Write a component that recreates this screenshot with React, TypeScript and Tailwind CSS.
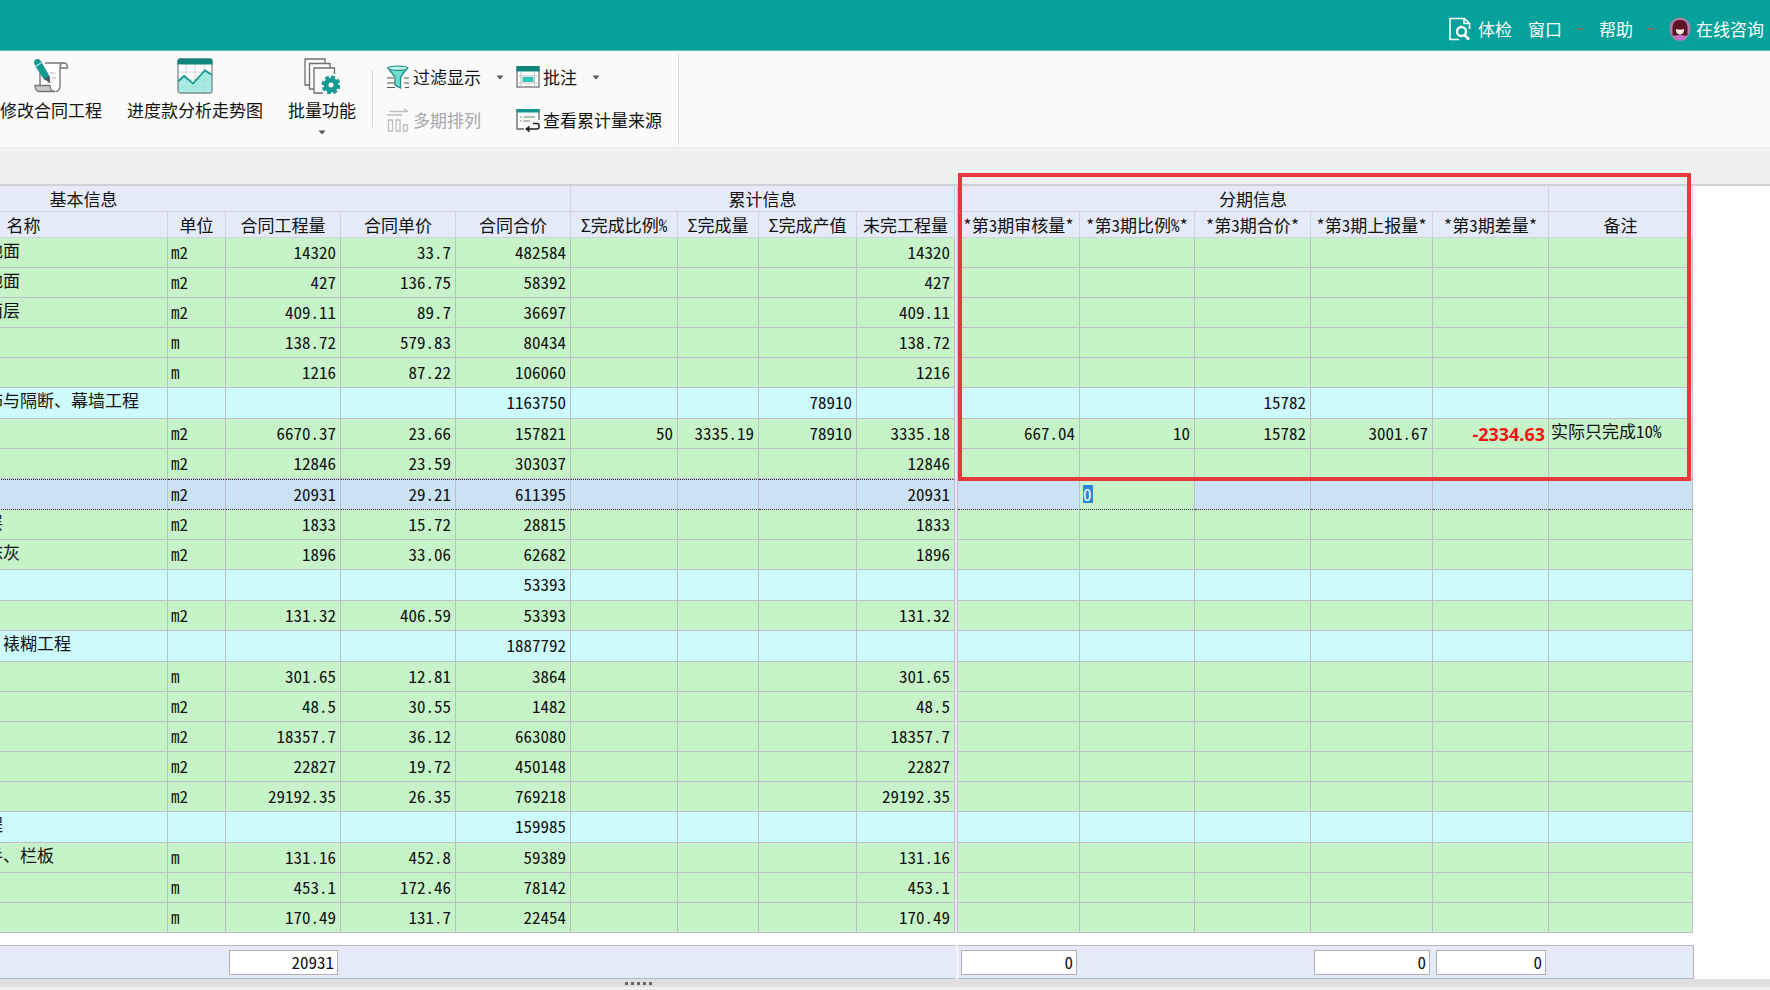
import type { ReactNode } from "react";

type Row = {
  kind?: "group" | "selected";
  name?: string;
  cells: string[];
  period?: string[];
};

const rows: Row[] = [
  { name: "地面", cells: ["m2", "14320", "33.7", "482584", "", "", "", "14320"] },
  { name: "地面", cells: ["m2", "427", "136.75", "58392", "", "", "", "427"] },
  { name: "面层", cells: ["m2", "409.11", "89.7", "36697", "", "", "", "409.11"] },
  { cells: ["m", "138.72", "579.83", "80434", "", "", "", "138.72"] },
  { cells: ["m", "1216", "87.22", "106060", "", "", "", "1216"] },
  {
    kind: "group",
    name: "饰与隔断、幕墙工程",
    cells: ["", "", "", "1163750", "", "", "78910", ""],
    period: ["", "", "15782", "", "", ""],
  },
  {
    cells: ["m2", "6670.37", "23.66", "157821", "50", "3335.19", "78910", "3335.18"],
    period: ["667.04", "10", "15782", "3001.67", "-2334.63", "实际只完成10%"],
  },
  { cells: ["m2", "12846", "23.59", "303037", "", "", "", "12846"] },
  { kind: "selected", cells: ["m2", "20931", "29.21", "611395", "", "", "", "20931"] },
  { name: "层", cells: ["m2", "1833", "15.72", "28815", "", "", "", "1833"] },
  { name: "抹灰", cells: ["m2", "1896", "33.06", "62682", "", "", "", "1896"] },
  { kind: "group", cells: ["", "", "", "53393", "", "", "", ""] },
  { cells: ["m2", "131.32", "406.59", "53393", "", "", "", "131.32"] },
  { kind: "group", name: "、裱糊工程", cells: ["", "", "", "1887792", "", "", "", ""] },
  { cells: ["m", "301.65", "12.81", "3864", "", "", "", "301.65"] },
  { cells: ["m2", "48.5", "30.55", "1482", "", "", "", "48.5"] },
  { cells: ["m2", "18357.7", "36.12", "663080", "", "", "", "18357.7"] },
  { cells: ["m2", "22827", "19.72", "450148", "", "", "", "22827"] },
  { cells: ["m2", "29192.35", "26.35", "769218", "", "", "", "29192.35"] },
  { kind: "group", name: "程", cells: ["", "", "", "159985", "", "", "", ""] },
  { name: "手、栏板", cells: ["m", "131.16", "452.8", "59389", "", "", "", "131.16"] },
  { cells: ["m", "453.1", "172.46", "78142", "", "", "", "453.1"] },
  { cells: ["m", "170.49", "131.7", "22454", "", "", "", "170.49"] },
];

const emptyPeriod = ["", "", "", "", "", ""];

const mainHeads = ["名称", "单位", "合同工程量", "合同单价", "合同合价", "Σ完成比例%", "Σ完成量", "Σ完成产值", "未完工程量"];
const periodHeads = ["*第3期审核量*", "*第3期比例%*", "*第3期合价*", "*第3期上报量*", "*第3期差量*", "备注"];

const head = "border-r border-b border-[#d0d2e2] bg-[#e4eaf7] p-0 text-center font-normal whitespace-nowrap";
const cell = "border-r border-[#bcbccb] px-0 pt-0 overflow-hidden whitespace-nowrap";

function rowClass(kind?: string) {
  if (kind === "group") return "h-[31px] bg-[#cdfbfc]";
  if (kind === "selected") return "h-[31px] bg-[#cbe2f5]";
  return "h-[30px] bg-[#c6f4c8]";
}

function lineClass(kind?: string) {
  return kind === "selected"
    ? "border-y border-t-[#333] border-b-[#333] [border-top-style:dotted] [border-bottom-style:dotted]"
    : "border-b";
}

function MainCols() {
  return (
    <colgroup>
      <col className="w-[283px]" />
      <col className="w-[288px]" />
      <col className="w-[58px]" />
      <col className="w-[115px]" />
      <col className="w-[115px]" />
      <col className="w-[115px]" />
      <col className="w-[107px]" />
      <col className="w-[81px]" />
      <col className="w-[98px]" />
      <col className="w-[98px]" />
    </colgroup>
  );
}

function PeriodCols() {
  return (
    <colgroup>
      <col className="w-[122px]" />
      <col className="w-[115px]" />
      <col className="w-[116px]" />
      <col className="w-[122px]" />
      <col className="w-[116px]" />
      <col className="w-[144px]" />
    </colgroup>
  );
}

function MainTable() {
  return (
    <table className="-ml-[403px] w-[1358px] shrink-0 table-fixed border-separate border-spacing-0">
      <MainCols />
      <thead>
        <tr className="h-[26px]">
          <th colSpan={6} className={head}>基本信息</th>
          <th colSpan={4} className={head}>累计信息</th>
        </tr>
        <tr className="h-[26px]">
          <th className={head} />
          {mainHeads.map((h) => (
            <th key={h} className={head}>{h}</th>
          ))}
        </tr>
      </thead>
      <tbody>
        {rows.map((r, i) => (
          <tr key={i} className={rowClass(r.kind)}>
            <td className={`${cell} ${lineClass(r.kind)}`} />
            <td className={`${cell} ${lineClass(r.kind)} pb-[6px] pl-[106px]`}>{r.name}</td>
            {r.cells.map((c, j) => (
              <td key={j} className={`${cell} ${lineClass(r.kind)} pb-[2px] ${j === 0 ? "pl-[3px] text-left" : "pr-1 text-right"}`}>
                {c}
              </td>
            ))}
          </tr>
        ))}
      </tbody>
    </table>
  );
}

function PeriodTable() {
  return (
    <table className="w-[735px] table-fixed border-separate border-spacing-0">
      <PeriodCols />
      <thead>
        <tr className="h-[26px]">
          <th colSpan={5} className={head}>分期信息</th>
          <th className={head} />
        </tr>
        <tr className="h-[26px]">
          {periodHeads.map((h) => (
            <th key={h} className={head}>{h}</th>
          ))}
        </tr>
      </thead>
      <tbody>
        {rows.map((r, i) => (
          <tr key={i} className={rowClass(r.kind)}>
            {(r.period ?? emptyPeriod).map((c, j) => {
              const base = `${cell} ${lineClass(r.kind)}`;
              if (r.kind === "selected" && j === 1)
                return (
                  <td key={j} className={`${base} bg-[#c6f4c8] pb-[2px] pl-[3px]`}>
                    <input
                      aria-label="第3期比例"
                      defaultValue="0"
                      className="block h-[18px] w-[10px] bg-[#2f86e0] p-0 text-left text-white outline-none"
                    />
                  </td>
                );
              if (j === 5) return <td key={j} className={`${base} pb-[6px] pl-[2px] text-left`}>{c}</td>;
              if (j === 4)
                return (
                  <td key={j} className={`${base} pr-[3px] pb-0 text-right font-['Noto_Sans',sans-serif] text-[18px] font-bold text-[#f01414]`}>
                    {c}
                  </td>
                );
              return <td key={j} className={`${base} pr-1 pb-[2px] text-right`}>{c}</td>;
            })}
          </tr>
        ))}
      </tbody>
    </table>
  );
}

function Total({ label, value }: { label: string; value: string }) {
  return (
    <input
      aria-label={label}
      readOnly
      value={value}
      className="block h-[25px] w-full border border-[#b0b0b4] bg-white px-[3px] pb-[2px] text-right outline-none"
    />
  );
}

function Caret() {
  return (
    <svg width="8" height="5" viewBox="0 0 8 5" className="shrink-0">
      <path d="M0.5 0.5h7L4 4.5z" fill="#555" />
    </svg>
  );
}

function EditContractIcon() {
  return (
    <svg width="36" height="36" viewBox="0 0 36 36" fill="none">
      <path d="M12 5h18c-3 0-3 3-3 6v17c0 3-1 5.500-4 5.500H6" fill="#fff" />
      <path d="M12 5h18M27 11c0-3 0-6 3.500-6s4 2 4 5h-7.500v17c0 3.500-1 6.500-4.500 6.500M7 12v15" stroke="#777" strokeWidth="1.400" />
      <path d="M2 27.500h15c0 3.500 1.500 6 5 6H6.500C3.500 33.500 2 31 2 27.500z" fill="#c9c9cf" stroke="#777" strokeWidth="1.300" />
      <path d="M17 15h6M19 20h4M14 24.500h6" stroke="#b5b5b5" strokeWidth="1.200" strokeDasharray="4 1" />
      <path d="M1.800 7.500l6-4.500L16.500 18l.5 6-6-2.500z" fill="#159a91" />
      <circle cx="4.500" cy="4.500" r="3.400" fill="#159a91" />
      <path d="M1.500 9L8 5" stroke="#b9eee8" strokeWidth="1.200" />
      <path d="M11 21l5.500-3 .8 7z" fill="#55555c" />
    </svg>
  );
}

function TrendIcon() {
  return (
    <svg width="36" height="36" viewBox="0 0 36 36" fill="none">
      <rect x="1" y="1" width="34" height="34" rx="2" fill="#fff" />
      <path d="M9 6v28M18 6v28M27 6v28M2 14h32M2 22h32M2 29h32" stroke="#c8d4d4" strokeWidth="1" />
      <path d="M1 22l6-5 9 8 12-13 7 4v17a2 2 0 01-2 2H3a2 2 0 01-2-2z" fill="#8ee5da" fillOpacity=".75" />
      <path d="M1 23.500l6-5.500 9 7.500L28 12.500l7 4.500" stroke="#159a91" strokeWidth="1.800" />
      <rect x="1" y="1" width="34" height="34" rx="2" stroke="#7d8a8c" strokeWidth="1.300" />
      <path d="M.5 6.500V3a2.500 2.500 0 012.500-2.500h30A2.500 2.500 0 0135.500 3v3.500z" fill="#12857e" />
    </svg>
  );
}

function BatchIcon() {
  return (
    <svg width="36" height="36" viewBox="0 0 36 36" fill="none" stroke="#6f6f6f" strokeWidth="1.300">
      <path d="M5 27H1V1h20v4" />
      <path d="M10 31H5.500V5.500H26V10" />
      <path d="M19 35h-9V10h20.500v6" />
      <circle cx="27" cy="27" r="5" stroke="#159a91" strokeWidth="5" />
      <circle cx="27" cy="27" r="8" stroke="#159a91" strokeWidth="3" strokeDasharray="3.800 2.480" />
    </svg>
  );
}

function FilterIcon() {
  return (
    <svg width="24" height="24" viewBox="0 0 24 24" fill="none">
      <path d="M1 13h7M1 18h8M1 22.500h8M18 13h5M18 18h5M19 22.500h4" stroke="#555" strokeWidth="1.200" />
      <path d="M2 3l7 9v8l5.500 3V12l7-9z" fill="#6fdccd" stroke="#1b8f87" strokeWidth="1.300" />
      <ellipse cx="11.700" cy="3.200" rx="9.700" ry="2.200" fill="#c4f3ec" stroke="#1b8f87" strokeWidth="1.200" />
    </svg>
  );
}

function NoteIcon() {
  return (
    <svg width="24" height="24" viewBox="0 0 24 24" fill="none">
      <rect x="1" y="2" width="22" height="20" fill="#fff" stroke="#666" strokeWidth="1.200" />
      <path d="M5 7v15M18.500 7v15M1 11h22M1 18h22" stroke="#b9c4c4" />
      <rect x="6.500" y="12" width="11" height="5" fill="#35c7b5" />
      <rect x="0.500" y="1" width="23" height="5.500" fill="#12857e" />
    </svg>
  );
}

function ArrangeIcon() {
  return (
    <svg width="24" height="24" viewBox="0 0 24 24" fill="none" stroke="#bdbdbd" strokeWidth="1.300">
      <path d="M1 7h15M3 3.500h19M18 1l4 2.500" />
      <path d="M2.500 12h4v11h-4zM10 12h4v11h-4zM17.500 17h4v6h-4z" />
    </svg>
  );
}

function SourceIcon() {
  return (
    <svg width="24" height="24" viewBox="0 0 24 24" fill="none">
      <path d="M8 21H1V2h22v10" stroke="#666" strokeWidth="1.300" />
      <rect x="0.500" y="1" width="23" height="3.500" fill="#12958c" />
      <path d="M4 9h1.500M7.500 9H19M4 13h1.500M7.500 13H14" stroke="#777" strokeWidth="1.200" />
      <path d="M12 21h9q2 0 2-2v-1.500q0-2-2-2h-4" stroke="#222" strokeWidth="1.500" />
      <path d="M13.500 17.500V24.500L9 21z" fill="#222" />
    </svg>
  );
}

function CheckupIcon() {
  return (
    <svg width="22" height="24" viewBox="0 0 22 24" fill="none" stroke="#fff" strokeWidth="1.600">
      <path d="M10 22.500H1V1.500h14.500l5 5V12M15 1.500v5h5" />
      <circle cx="12.500" cy="14.500" r="4.500" strokeWidth="2.400" />
      <path d="M15.500 18l4.500 4.500" strokeWidth="2.600" />
    </svg>
  );
}

function AvatarIcon() {
  return (
    <svg width="22" height="24" viewBox="0 0 22 24">
      <ellipse cx="11" cy="12" rx="10.500" ry="11.500" fill="#b47fa8" />
      <path d="M3.500 18.500V11C3.500 5.500 6.500 3 11 3s7.500 2.500 7.500 8v7.500z" fill="#5b1526" />
      <path d="M7 12q4 1 8 0v2q-1 3.500-4 3.500t-4-3.500z" fill="#f6e6dc" />
      <path d="M5 22q1-4 6-4t6 4q-6 3-12 0z" fill="#c271c0" />
    </svg>
  );
}

function BigButton({ icon, label, caret }: { icon: ReactNode; label: string; caret?: boolean }) {
  return (
    <button className="flex flex-col items-center whitespace-nowrap">
      {icon}
      <span className="mt-1 leading-[24px]">{label}</span>
      {caret && <span className="mt-2"><Caret /></span>}
    </button>
  );
}

function SmallButton({ icon, label, caret, disabled }: { icon: ReactNode; label: string; caret?: boolean; disabled?: boolean }) {
  return (
    <button disabled={disabled} className="flex h-6 items-center whitespace-nowrap disabled:text-[#a8a8a8]">
      {icon}
      <span className="ml-[3px]">{label}</span>
      {caret && <span className="ml-[15px]"><Caret /></span>}
    </button>
  );
}

function MenuTick() {
  return <span className="h-[2px] w-[6px] bg-[#7d6f69]" />;
}

export default function App() {
  return (
    <div className="flex min-h-screen flex-col overflow-hidden bg-[#f0f0f0] font-['Noto_Sans_Mono_CJK_SC','Noto_Sans_CJK_SC',sans-serif] text-[17px] leading-[20px] text-[#111]">
      <header className="flex h-[51px] items-center justify-end border-b border-[#5dbdb8] bg-[#05a19a] pt-2 pr-[6px] text-white">
        <button className="flex items-center gap-[7px]">
          <CheckupIcon />
          体检
        </button>
        <button className="ml-4 flex items-center gap-[15px]">
          窗口
          <MenuTick />
        </button>
        <button className="ml-4 flex items-center gap-[15px]">
          帮助
          <MenuTick />
        </button>
        <button className="ml-[15px] flex items-center gap-[5px]">
          <AvatarIcon />
          在线咨询
        </button>
      </header>

      <div className="flex h-[97px] items-start border-b border-[#ececec] bg-[#fafafa] pt-[7px]">
        <div className="flex gap-[25px]">
          <BigButton icon={<EditContractIcon />} label="修改合同工程" />
          <BigButton icon={<TrendIcon />} label="进度款分析走势图" />
          <BigButton icon={<BatchIcon />} label="批量功能" caret />
        </div>
        <span className="mt-3 ml-4 h-[57px] w-px bg-[#d8d8d8]" />
        <div className="mt-[7px] ml-[13px] grid grid-cols-[auto_auto] gap-x-3 gap-y-[19px]">
          <SmallButton icon={<FilterIcon />} label="过滤显示" caret />
          <SmallButton icon={<NoteIcon />} label="批注" caret />
          <SmallButton icon={<ArrangeIcon />} label="多期排列" disabled />
          <SmallButton icon={<SourceIcon />} label="查看累计量来源" />
        </div>
        <span className="-mt-1 ml-4 h-[91px] w-px bg-[#dcdcdc]" />
      </div>

      <main className="mt-9 border-t-2 border-[#cfcfd6] bg-white">
        <div className="flex">
          <div className="flex shrink-0">
            <MainTable />
            <div className="w-[3px] border-r border-[#c9b8dc] bg-[#ece8f6]" />
          </div>
          <div className="relative shrink-0">
            <PeriodTable />
            <div className="pointer-events-none absolute -top-[13px] left-0 h-[308px] w-[733px] border-4 border-[#e8383b]" />
          </div>
        </div>

        <div className="mt-3 flex">
          <table className="-ml-[403px] h-[34px] w-[1358px] shrink-0 table-fixed border-separate border-spacing-0 border-y border-[#b4b6c0] bg-[#e4eaf7]">
            <MainCols />
            <tbody>
              <tr>
                <td colSpan={3} />
                <td className="px-[3px] py-0"><Total label="合同工程量" value="20931" /></td>
                <td colSpan={6} />
              </tr>
            </tbody>
          </table>
          <div className="w-[3px] shrink-0 border-r border-white bg-[#e4eaf7]" />
          <table className="h-[34px] w-[735px] shrink-0 table-fixed border-separate border-spacing-0 border-y border-r border-[#b4b6c0] bg-[#e4eaf7]">
            <PeriodCols />
            <tbody>
              <tr>
                <td className="px-[3px] py-0"><Total label="第3期审核量" value="0" /></td>
                <td />
                <td />
                <td className="px-[3px] py-0"><Total label="第3期上报量" value="0" /></td>
                <td className="px-[3px] py-0"><Total label="第3期差量" value="0" /></td>
                <td />
              </tr>
            </tbody>
          </table>
        </div>
      </main>

      <div className="flex h-2 items-center bg-[#dfdfdf] pl-[625px]">
        <span className="flex gap-[3px]">
          <i className="size-[3px] bg-[#666]" />
          <i className="size-[3px] bg-[#666]" />
          <i className="size-[3px] bg-[#666]" />
          <i className="size-[3px] bg-[#666]" />
          <i className="size-[3px] bg-[#666]" />
        </span>
      </div>
    </div>
  );
}
